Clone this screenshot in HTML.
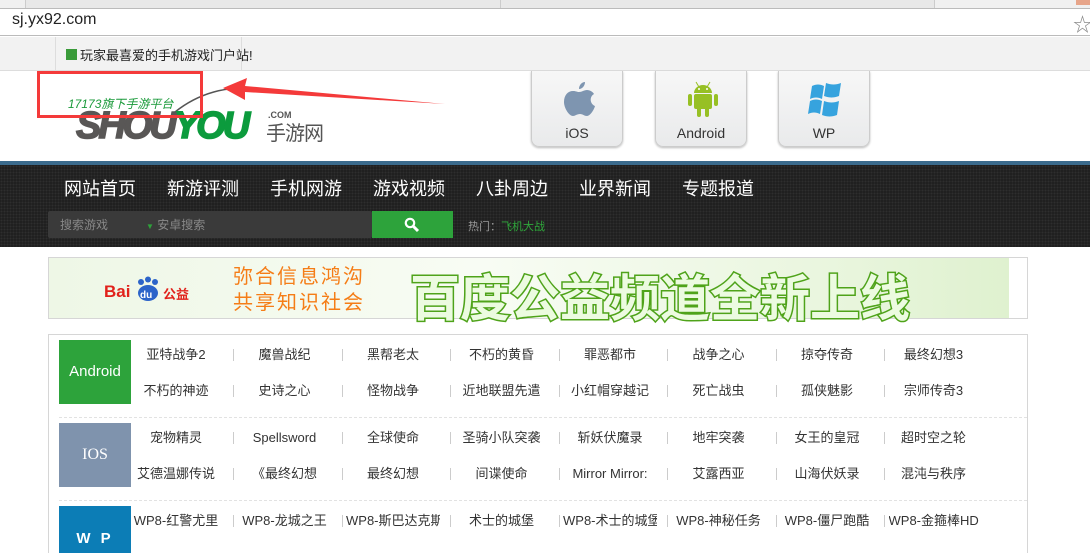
<!DOCTYPE html>
<html><head><meta charset="utf-8"><style>
*{margin:0;padding:0;box-sizing:border-box}
html,body{width:1090px;height:553px;overflow:hidden}
body{background:#fff;font-family:"Liberation Sans","Noto Sans CJK SC",sans-serif;position:relative}
.abs{position:absolute}
.tabs{left:0;top:0;width:1090px;height:9px;background:#f0f0f0}
.addr{left:0;top:8px;width:1090px;height:28px;background:#fff;border-top:1px solid #bbb;border-bottom:1px solid #bbb}
.bm{left:0;top:37px;width:1090px;height:34px;background:#f2f2f2;border-bottom:1px solid #ddd}
.nav{left:0;top:165px;width:1090px;height:82px;background:#1d1d1d;background-image:radial-gradient(#2e2e2e 1px,transparent 1.2px);background-size:3px 3px}
.navi{top:175px;color:#fff;font-size:18px}
.pbtn{top:71px;width:92px;height:76px;border:1px solid #ccc;border-top:none;border-radius:0 0 8px 8px;background:linear-gradient(#f7f7f7,#e9eaeb);box-shadow:0 1px 2px #bbb;text-align:center;font-size:14px;color:#333}
.pbtn span{position:absolute;left:0;right:0;top:54px}
.item{font-size:13px;line-height:18px;height:18px;color:#333;text-align:center;white-space:nowrap;overflow:hidden}
.sep{width:1px;height:12px;background:#ccc}
.lab{left:59px;width:72px;height:64px;color:#fff;font-size:15px;text-align:center}
</style></head><body>
<div class="abs tabs"><div class="abs" style="left:25px;top:0;width:480px;height:9px;border:1px solid #ccc;border-top:none;background:#e8e8e8"></div><div class="abs" style="left:500px;top:0;width:435px;height:9px;border:1px solid #ccc;border-top:none;background:#e8e8e8"></div><div class="abs" style="left:1076px;top:0;width:14px;height:5px;background:#e7a58a"></div></div>
<div class="abs addr"><div class="abs" style="left:12px;top:2px;font-size:16px;color:#222">sj.yx92.com</div><div class="abs" style="left:1073px;top:1px;font-size:19px;color:#888">☆</div></div>
<div class="abs bm"><div class="abs" style="left:55px;top:0;width:187px;height:33px;border-left:1px solid #ddd;border-right:1px solid #ddd"></div><div class="abs" style="left:66px;top:12px;width:11px;height:11px;background:#3a9b3a"></div><div class="abs" style="left:80px;top:8px;font-size:13px;color:#222">玩家最喜爱的手机游戏门户站!</div></div>

<!-- logo -->
<svg class="abs" style="left:170px;top:82px" width="120" height="40"><path d="M5 30 C30 10 60 4 75 8" stroke="#555" stroke-width="1.5" fill="none"/></svg>
<div class="abs" style="left:68px;top:95px;font-size:12px;color:#1a9a3a;font-style:italic">17173旗下手游平台</div>
<div class="abs" style="left:76px;top:104px;font-size:38px;line-height:44px;font-weight:bold;font-style:italic;letter-spacing:-3px;color:#595756;-webkit-text-stroke:1.5px #595756;font-family:'Liberation Sans',sans-serif">SHOU<span style="color:#0c9b3d;-webkit-text-stroke:1.5px #0c9b3d">YOU</span></div>
<div class="abs" style="left:268px;top:110px;font-size:9px;font-weight:bold;color:#555">.COM</div>
<div class="abs" style="left:266px;top:117px;font-size:20px;color:#555;letter-spacing:-1px">手游网</div>
<div class="abs" style="left:37px;top:71px;width:166px;height:47px;border:3px solid #f43a3a"></div>
<svg class="abs" style="left:215px;top:78px" width="240" height="35"><polygon points="8,10 32,0 30,8 230,26 30,14 30,22" fill="#f43a3a"/></svg>

<div class="abs pbtn" style="left:531px"><svg class="abs" style="left:31px;top:9px" width="32" height="40" viewBox="0 0 32 40"><path d="M22 2c0 4-3 7-6 7 0-4 3-7 6-7zM16 12c3 0 5-2 8-2 3 0 6 2 7 4-5 3-4 10 1 12-1 4-5 10-8 10-3 0-4-2-7-2s-5 2-7 2C6 36 1 28 1 22 1 15 5 11 10 11c3 0 4 1 6 1z" fill="#7e95b0"/></svg><span>iOS</span></div>
<div class="abs pbtn" style="left:655px"><svg class="abs" style="left:30px;top:9px" width="34" height="40" viewBox="0 0 34 40"><path d="M8 13a9 8 0 0 1 18 0z" fill="#97c024"/><rect x="8" y="14" width="18" height="15" rx="2" fill="#97c024"/><rect x="2" y="14" width="4" height="12" rx="2" fill="#97c024"/><rect x="28" y="14" width="4" height="12" rx="2" fill="#97c024"/><rect x="11" y="27" width="4" height="10" rx="2" fill="#97c024"/><rect x="19" y="27" width="4" height="10" rx="2" fill="#97c024"/><path d="M10 2l3 5M24 2l-3 5" stroke="#97c024"/><circle cx="13" cy="9" r="1" fill="#fff"/><circle cx="21" cy="9" r="1" fill="#fff"/></svg><span>Android</span></div>
<div class="abs pbtn" style="left:778px"><svg class="abs" style="left:29px;top:11px" width="36" height="36" viewBox="0 0 36 36"><path d="M4 4c4-2 8-2 12 0l-2 13c-4-2-8-2-12 0zM18 1c5 2 10 2 15 0l-2 13c-5 2-10 2-15 0zM2 19c4-2 8-2 12 0l-2 13c-4-2-8-2-12 0zM16 19c5 2 10 2 15 0l-2 14c-5 2-10 2-15 0z" fill="#36a3de"/></svg><span>WP</span></div>

<div class="abs" style="left:0;top:161px;width:1090px;height:4px;background:#3b6b8d"></div>
<div class="abs nav"></div>
<div class="abs navi" style="left:64px">网站首页</div><div class="abs navi" style="left:167px">新游评测</div><div class="abs navi" style="left:270px">手机网游</div><div class="abs navi" style="left:373px">游戏视频</div><div class="abs navi" style="left:476px">八卦周边</div><div class="abs navi" style="left:579px">业界新闻</div><div class="abs navi" style="left:682px">专题报道</div>
<div class="abs" style="left:48px;top:211px;width:324px;height:27px;background:#3a3a3a;border-radius:2px"></div>
<div class="abs" style="left:60px;top:216px;font-size:12px;color:#888">搜索游戏</div>
<div class="abs" style="left:146px;top:216px;font-size:12px;color:#888"><span style="color:#2ea23a;font-size:8px">▼</span> 安卓搜索</div>
<div class="abs" style="left:372px;top:211px;width:81px;height:27px;background:#2da33b"><svg class="abs" style="left:32px;top:6px" width="16" height="16"><circle cx="6" cy="6" r="4.2" stroke="#fff" stroke-width="2.2" fill="none"/><path d="M9 9l5 5" stroke="#fff" stroke-width="3"/></svg></div>
<div class="abs" style="left:468px;top:218px;font-size:11px;color:#999">热门：<span style="color:#2fa83b">飞机大战</span></div>

<!-- banner -->
<div class="abs" style="left:48px;top:257px;width:980px;height:62px;border:1px solid #d6d6d6;background:#fff"></div>
<div class="abs" style="left:49px;top:258px;width:960px;height:60px;background:linear-gradient(90deg,#eef7e6,#f8fcf4 45%,#eaf6df 80%,#dff1cf)"></div>
<div class="abs" style="left:104px;top:282px;font-size:17px;font-weight:bold;color:#e1221b">Bai</div>
<div class="abs" style="left:135px;top:276px;width:26px;height:26px"><svg width="26" height="26"><circle cx="6" cy="6" r="3" fill="#2c64c9"/><circle cx="13" cy="3.5" r="3" fill="#2c64c9"/><circle cx="20" cy="6" r="3" fill="#2c64c9"/><ellipse cx="13" cy="17" rx="10" ry="8" fill="#2c64c9"/><text x="5" y="22" font-size="10" fill="#fff" font-family="Liberation Sans" font-weight="bold">du</text></svg></div>
<div class="abs" style="left:163px;top:284px;font-size:13px;font-weight:bold;color:#e1221b">公益</div>
<div class="abs" style="left:233px;top:264px;font-size:20px;line-height:26px;color:#f57d17;letter-spacing:2px">弥合信息鸿沟<br>共享知识社会</div>
<div class="abs" style="left:410px;top:259px;font-size:50px;font-weight:bold;color:#ecfbe0;-webkit-text-stroke:3px #4fa31a;paint-order:stroke fill;white-space:nowrap">百度公益频道全新上线</div>

<!-- table -->
<div class="abs" style="left:48px;top:334px;width:980px;height:230px;border:1px solid #d6d6d6"></div>
<div class="abs" style="left:59px;top:417px;width:968px;border-top:1px dashed #e2e2e2"></div>
<div class="abs" style="left:59px;top:500px;width:968px;border-top:1px dashed #e2e2e2"></div>
<div class="abs lab" style="top:340px;background:#2da33b;line-height:64px">Android</div>
<div class="abs lab" style="top:423px;background:#7f93ad;line-height:64px;font-family:'Liberation Serif',serif;font-size:16px">IOS</div>
<div class="abs lab" style="top:506px;height:60px;background:#0c7db6;padding-top:24px;font-weight:bold;letter-spacing:3px">W P</div>

<div id="t"></div>
<script>
var rows=[[346,["亚特战争2","魔兽战纪","黑帮老太","不朽的黄昏","罪恶都市","战争之心","掠夺传奇","最终幻想3"]],
[382,["不朽的神迹","史诗之心","怪物战争","近地联盟先遣","小红帽穿越记","死亡战虫","孤侠魅影","宗师传奇3"]],
[429,["宠物精灵","Spellsword","全球使命","圣骑小队突袭","斩妖伏魔录","地牢突袭","女王的皇冠","超时空之轮"]],
[465,["艾德温娜传说","《最终幻想","最终幻想","间谍使命","Mirror Mirror:","艾露西亚","山海伏妖录","混沌与秩序"]],
[512,["WP8-红警尤里","WP8-龙城之王","WP8-斯巴达克斯","术士的城堡","WP8-术士的城堡","WP8-神秘任务","WP8-僵尸跑酷","WP8-金箍棒HD"]]];
var h="";
rows.forEach(function(r){r[1].forEach(function(s,i){var x=129+i*108.5;
h+='<div class="abs item" style="left:'+x+'px;top:'+r[0]+'px;width:'+(i<7?94:90)+'px">'+s+'</div>';
if(i<7)h+='<div class="abs sep" style="left:'+(x+104)+'px;top:'+(r[0]+3)+'px"></div>';});});
document.getElementById("t").innerHTML=h;
</script>
</body></html>
